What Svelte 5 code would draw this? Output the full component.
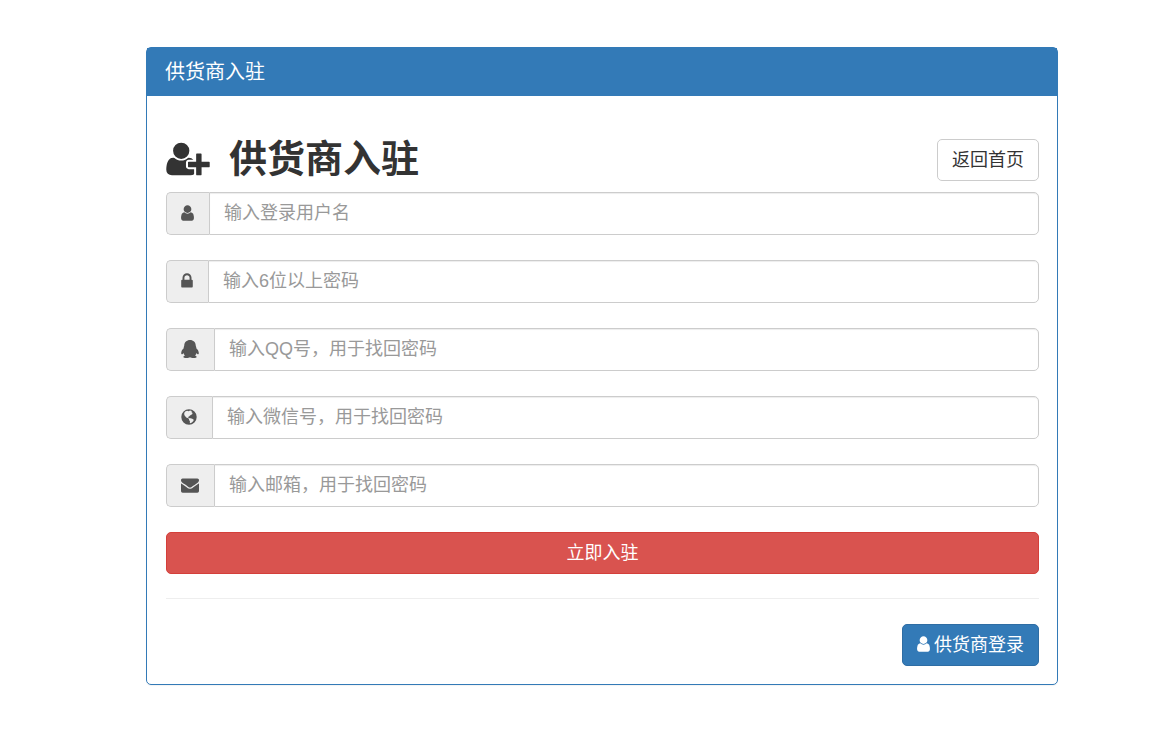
<script>
	const userPath = 'M1408 1399q0 109-62.500 187t-150.500 78h-854q-88 0-150.500-78t-62.500-187q0-85 8.500-160.500t31.500-152 58.500-131 94-89 134.500-34.500q131 128 313 128t313-128q76 0 134.500 34.500t94 89 58.500 131 31.500 152 8.500 160.500zm-256-887q0 159-112.500 271.500t-271.500 112.500-271.500-112.500-112.500-271.500 112.500-271.500 271.500-112.500 271.500 112.500 112.500 271.500z';

	const fields = [
		{
			name: 'user',
			type: 'text',
			placeholder: '输入登录用户名',
			width: 13,
			viewBox: '128 0 1280 1792',
			path: userPath
		},
		{
			name: 'pwd',
			type: 'password',
			placeholder: '输入6位以上密码',
			width: 12,
			viewBox: '320 0 1152 1792',
			path: 'M640 768h512v-192q0-106-75-181t-181-75-181 75-75 181v192zm832 96v576q0 40-28 68t-68 28h-960q-40 0-68-28t-28-68v-576q0-40 28-68t68-28h32v-192q0-184 132-316t316-132 316 132 132 316v192h32q40 0 68 28t28 68z'
		},
		{
			name: 'qq',
			type: 'text',
			placeholder: '输入QQ号，用于找回密码',
			width: 18,
			viewBox: '0 0 1792 1792',
			path: 'M896 0C570 0 330 220 320 560C320 610 280 650 270 710C260 770 285 790 270 820C140 930 20 1110 20 1290C20 1400 60 1430 90 1430C150 1430 200 1360 240 1290C265 1390 330 1480 400 1550C310 1580 240 1630 240 1690C240 1770 370 1792 530 1792C710 1792 830 1760 896 1710C962 1760 1082 1792 1262 1792C1422 1792 1552 1770 1552 1690C1552 1630 1482 1580 1392 1550C1462 1480 1527 1390 1552 1290C1592 1360 1642 1430 1702 1430C1732 1430 1772 1400 1772 1290C1772 1110 1652 930 1522 820C1507 790 1532 770 1522 710C1512 650 1472 610 1472 560C1462 220 1222 0 896 0z'
		},
		{
			name: 'weixin',
			type: 'text',
			placeholder: '输入微信号，用于找回密码',
			width: 16,
			viewBox: '128 0 1536 1792',
			path: 'M896 128a768 768 0 1 0 0 1536a768 768 0 1 0 0-1536zM520 340L700 270L860 330L1000 240L1180 300L1130 400L1230 480L1240 600L1120 660L1000 740L900 850L800 890L840 960L950 1020L1060 1010L1220 1080L1370 1170L1330 1300L1180 1440L1030 1530L980 1490L990 1330L900 1200L890 1080L760 1000L620 940L520 810L430 700L420 500z'
		},
		{
			name: 'email',
			type: 'email',
			placeholder: '输入邮箱，用于找回密码',
			width: 18,
			viewBox: '0 0 1792 1792',
			path: 'M1792 710v794q0 66-47 113t-113 47h-1472q-66 0-113-47t-47-113v-794q44 49 101 87 362 246 497 345 57 42 92.500 65.500t94.500 48 110 24.500h2q51 0 110-24.500t94.500-48 92.500-65.500q170-123 498-345 57-39 100-87zm0-294q0 79-49 151t-122 123q-376 261-468 325-10 7-42.500 31t-54 38.500-52 32.500-57.500 27-50 9h-2q-23 0-50-9t-57.500-27-52-32.500-54-38.500-42.500-31q-91-64-262-182.500t-205-142.500q-62-42-117-115.500t-55-136.500q0-78 41.500-130t118.500-52h1472q65 0 112.500 47t47.500 113z'
		}
	];

	let values = $state({ user: '', pwd: '', qq: '', weixin: '', email: '' });
</script>

<main>
	<div class="panel">
		<div class="panel-heading">供货商入驻</div>
		<div class="panel-body">
			<div class="title">
				<h1>
					<svg width="44" height="38" viewBox="0 0 2048 1792" aria-hidden="true">
						<path d="M704 896q-159 0-271.500-112.500t-112.500-271.500 112.500-271.500 271.500-112.500 271.500 112.500 112.500 271.500-112.500 271.500-271.500 112.500zm960 128h352q13 0 22.500 9.500t9.500 22.500v192q0 13-9.500 22.500t-22.500 9.500h-352v352q0 13-9.500 22.500t-22.500 9.500h-192q-13 0-22.500-9.500t-9.500-22.500v-352h-352q-13 0-22.500-9.500t-9.500-22.500v-192q0-13 9.500-22.500t22.500-9.500h352v-352q0-13 9.500-22.500t22.500-9.500h192q13 0 22.500 9.500t9.500 22.500v352zm-736 224q0 52 38 90t90 38h256v238q-68 50-171 50h-874q-121 0-194-69t-73-190q0-53 3.500-103.500t14-109 26.500-108.500 43-97.500 62-81 85.500-53.500 111.500-20q19 0 39 17 79 61 154.500 91.500t164.500 30.500 164.500-30.500 154.500-91.500q20-17 39-17 132 0 217 96h-223q-52 0-90 38t-38 90v192z" />
					</svg>
					供货商入驻
				</h1>
				<a class="btn" href="/">返回首页</a>
			</div>
			<form onsubmit={(e) => e.preventDefault()}>
				{#each fields as field}
					<div class="input-group">
						<label for={field.name} aria-label={field.placeholder}>
							<svg width={field.width} height="18" viewBox={field.viewBox} aria-hidden="true">
								<path fill-rule="evenodd" d={field.path} />
							</svg>
						</label>
						<input id={field.name} type={field.type} placeholder={field.placeholder} bind:value={values[field.name]} />
					</div>
				{/each}
				<button class="btn danger" type="submit">立即入驻</button>
			</form>
			<hr />
			<div class="footer">
				<a class="btn primary" href="/login">
					<svg width="13" height="18" viewBox="128 0 1280 1792" aria-hidden="true">
						<path d={userPath} />
					</svg>
					供货商登录
				</a>
			</div>
		</div>
	</div>
</main>

<style>
	:global(body) {
		background: #fff;
		color: #333;
		font-family: 'Liberation Sans', 'Noto Sans CJK SC', sans-serif;
		font-size: 18px;
		line-height: 24px;
	}

	main {
		padding: 47px 105px 47px 146px;
	}

	svg {
		padding-bottom: 2px;
		fill: currentColor;
	}

	.panel {
		border: 1px solid #337ab7;
		border-radius: 5px;
		box-shadow: 0 1px 1px rgba(0, 0, 0, 0.05);
	}

	.panel-heading {
		padding: 12px 18px;
		background: #337ab7;
		color: #fff;
		font-size: 20px;
	}

	.panel-body {
		padding: 36px 18px 18px 19px;
	}

	.title {
		display: flex;
		align-items: center;
		justify-content: space-between;
		margin-bottom: 5px;
	}

	h1 {
		display: flex;
		align-items: center;
		gap: 19px;
		margin: 0;
		font-size: 38px;
		line-height: 55px;
	}

	form {
		display: flex;
		flex-direction: column;
		gap: 25px;
	}

	.input-group {
		display: flex;
	}

	label {
		display: flex;
		align-items: center;
		padding: 0 15px 0 14px;
		border: 1px solid #ccc;
		border-right: 0;
		border-radius: 5px 0 0 5px;
		background: #eee;
		color: #555;
	}

	input {
		flex: 1;
		min-width: 0;
		box-sizing: border-box;
		height: 43px;
		padding: 7px 14px;
		border: 1px solid #ccc;
		border-radius: 0 5px 5px 0;
		box-shadow: inset 0 1px 1px rgba(0, 0, 0, 0.075);
		color: #555;
		font: inherit;
	}

	input::placeholder {
		color: #999;
	}

	input:focus {
		border-color: #66afe9;
		outline: 0;
	}

	.btn {
		display: inline-flex;
		align-items: center;
		justify-content: center;
		gap: 4px;
		box-sizing: border-box;
		height: 42px;
		padding: 0 14px;
		border: 1px solid #ccc;
		border-radius: 5px;
		background: #fff;
		color: #333;
		font: inherit;
		text-decoration: none;
		cursor: pointer;
	}

	.danger {
		border-color: #d43f3a;
		background: #d9534f;
		color: #fff;
	}

	.primary {
		border-color: #2e6da4;
		background: #337ab7;
		color: #fff;
	}

	hr {
		margin: 24px 0 25px;
		border: 0;
		border-top: 1px solid #eee;
	}

	.footer {
		display: flex;
		justify-content: flex-end;
	}
</style>
